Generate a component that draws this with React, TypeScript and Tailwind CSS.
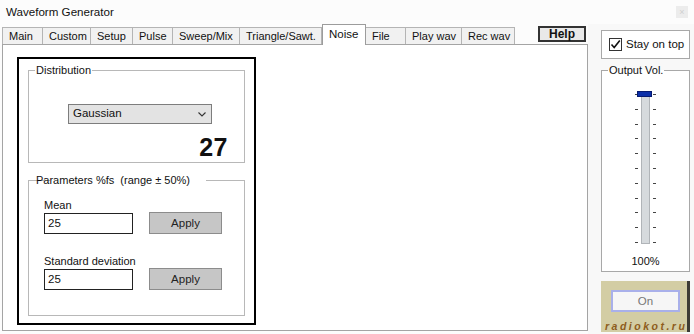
import React from 'react';

const tabs: { label: string; w: string; active?: boolean }[] = [
  { label: 'Main', w: 'w-[41px]' },
  { label: 'Custom', w: 'w-[48px]' },
  { label: 'Setup', w: 'w-[42px]' },
  { label: 'Pulse', w: 'w-[40px]' },
  { label: 'Sweep/Mix', w: 'w-[67px]' },
  { label: 'Triangle/Sawt.', w: 'w-[82px]' },
  { label: 'Noise', w: 'w-[44px]', active: true },
  { label: 'File', w: 'w-[40px]' },
  { label: 'Play wav', w: 'w-[56px]' },
  { label: 'Rec wav', w: 'w-[53px]' },
];

function Tab({ label, w, active }: { label: string; w: string; active?: boolean }) {
  if (active) {
    return (
      <div className={`${w} h-[21px] -mb-px relative z-10 bg-white border border-b-0 border-[#9c9c9c] pl-[6px] pt-[2px] text-[11.5px] leading-[14px]`}>
        {label}
      </div>
    );
  }
  return (
    <div className={`${w} h-[17px] bg-[#f1f1f1] border border-b-0 border-l-0 first:border-l border-[#b4b4b4] pl-[6px] pt-[1px] text-[11px] leading-[14px]`}>
      {label}
    </div>
  );
}

function ParamRow({ label, value, gap }: { label: string; value: string; gap: string }) {
  return (
    <div className={`${gap} flex flex-col`}>
      <div className="text-[11px] leading-[13px]">{label}</div>
      <div className="flex items-center">
        <div className="w-[89px] h-[21px] border border-[#222] bg-white pl-[3px] text-[11.5px] leading-[19px]">{value}</div>
        <button className="ml-[16px] w-[73px] h-[22px] bg-[#c6c6c6] border border-[#8c8c8c] text-[11.5px] leading-[20px] text-[#222] text-center">
          Apply
        </button>
      </div>
    </div>
  );
}

export default function App() {
  const ticks = Array.from({ length: 11 });
  return (
    <div className="w-[694px] h-[334px] overflow-hidden bg-[#fcfcfc] text-[#111] font-['Liberation_Sans',Arial,sans-serif] flex flex-col">
      <div className="h-[24px] flex items-center justify-between pl-[6px] pr-[6px]">
        <span className="text-[11.6px]">Waveform Generator</span>
        <div className="w-[12px] h-[12px] bg-[#ececec] text-[#cfcfcf] text-[9px] leading-[12px] text-center">×</div>
      </div>

      <div className="flex flex-1">
        {/* tab control */}
        <div className="w-[588px] pl-[2px] flex flex-col">
          <div className="h-[20px] flex items-end relative">
            {tabs.map((t) => (
              <Tab key={t.label} {...t} />
            ))}
            <button className="ml-[23px] mb-[2px] w-[48px] h-[16px] bg-[#e9e9e9] border-2 border-[#333] text-[12px] font-bold leading-[12px] text-center">
              Help
            </button>
          </div>
          <div className="h-[287px] border border-[#a4a4a4] bg-white pl-[14px] pt-[12px]">
            <div className="w-[239px] h-[268px] border-2 border-black pl-[9px] pt-[5px]">
              <fieldset className="w-[217px] h-[99px] border border-[#b8b8b8] pr-[16px]">
                <legend className="ml-[6px] px-[1px] text-[11px] leading-[13px]">Distribution</legend>
                <div className="flex flex-col items-end">
                  <div className="self-start ml-[39px] mt-[27px] w-[144px] h-[20px] bg-[#e3e3e3] border border-[#7d7d7d] flex items-center justify-between pl-[4px] pr-[5px] text-[11.5px]">
                    <span>Gaussian</span>
                    <svg width="8" height="5" viewBox="0 0 8 5">
                      <polyline points="0.5,0.5 4,4 7.5,0.5" fill="none" stroke="#333" strokeWidth="1.1" />
                    </svg>
                  </div>
                  <div className="mt-[11px] text-[25px] leading-[25px] font-black tracking-[0.5px]">27</div>
                </div>
              </fieldset>

              <fieldset className="mt-[11px] w-[217px] h-[142px] border border-[#b8b8b8] pl-[15px]">
                <legend className="ml-[6px] px-[1px] -translate-x-[15px] text-[11px] leading-[13px]">
                  Parameters %fs&nbsp; (range ± 50%)
                </legend>
                <ParamRow label="Mean" value="25" gap="mt-[12px]" />
                <ParamRow label="Standard deviation" value="25" gap="mt-[21px]" />
              </fieldset>
            </div>
          </div>
        </div>

        {/* right column */}
        <div className="flex-1 bg-[#f8f8f8] pl-[13px] flex flex-col">
          <div className="mt-[6px] w-[89px] h-[29px] border border-[#a8a8a8] flex items-center pl-[7px] bg-white">
            <div className="w-[13px] h-[13px] border border-[#333] bg-white flex items-center justify-center">
              <svg width="11" height="11" viewBox="0 0 11 11">
                <polyline points="1.5,5.5 4.2,8.5 9.8,1.5" fill="none" stroke="#111" strokeWidth="1.6" />
              </svg>
            </div>
            <span className="ml-[4px] text-[11.5px]">Stay on top</span>
          </div>

          <fieldset className="mt-[5px] w-[89px] h-[208px] border border-[#a8a8a8] bg-white">
            <legend className="ml-[6px] px-[1px] text-[11px] leading-[13px]">Output Vol.</legend>
            <div className="mt-[16px] h-[151px] flex justify-center gap-[3px] relative">
              <div className="flex flex-col justify-between py-[1px]">
                {ticks.map((_, i) => (
                  <div key={i} className="w-[3px] h-px bg-[#444]" />
                ))}
              </div>
              <div className="w-[9px] h-full bg-[#d6dadd] border border-[#b0b4b8]" />
              <div className="flex flex-col justify-between py-[1px]">
                {ticks.map((_, i) => (
                  <div key={i} className="w-[3px] h-px bg-[#444]" />
                ))}
              </div>
              <div className="absolute top-[-2px] left-[35px] w-[15px] h-[6px] bg-[#0b2fa8] border border-[#061a70]" />
            </div>
            <div className="mt-[11px] text-center text-[11px] leading-[13px]">100%</div>
          </fieldset>

          <div className="mt-[9px] w-[89px] h-[51px] bg-[#d3cda4] border-r-[3px] border-[#3d3b35] pl-[10px] pt-[9px] flex flex-col">
            <div className="w-[69px] h-[22px] bg-[#f6f6f6] border-2 border-[#a9b0ea] text-center text-[11.5px] leading-[18px] text-[#777]">On</div>
            <div className="mt-[9px] -ml-[6px] italic font-bold text-[10.5px] leading-[10px] tracking-[2.5px] text-[#8d5c1c]">radiokot.ru</div>
          </div>
        </div>
      </div>
    </div>
  );
}
